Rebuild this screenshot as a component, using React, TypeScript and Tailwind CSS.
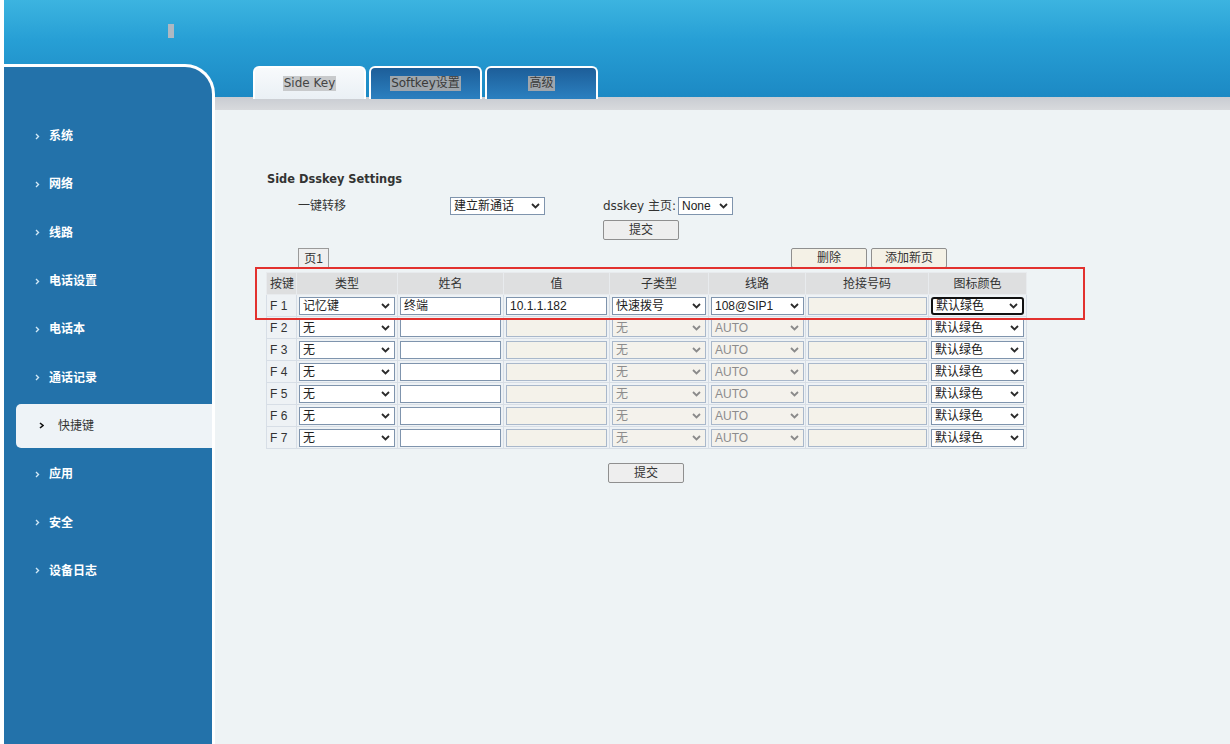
import React from 'react';

const menu = ['系统', '网络', '线路', '电话设置', '电话本', '通话记录', '快捷键', '应用', '安全', '设备日志'];

// F1 is the configured key, the rest are empty
const rows = Array.from({ length: 7 }, (_, i) => ({
  key: `F ${i + 1}`,
  type: i === 0 ? '记忆键' : '无',
  name: i === 0 ? '终端' : '',
  value: i === 0 ? '10.1.1.182' : '',
  sub: i === 0 ? '快速拨号' : '无',
  line: i === 0 ? '108@SIP1' : 'AUTO',
  active: i === 0,
}));

const Chevron: React.FC<{ muted?: boolean }> = ({ muted }) => (
  <svg width="9" height="6" viewBox="0 0 9 6" className="shrink-0">
    <path d="M1 1 L4.5 4.5 L8 1" fill="none" stroke={muted ? '#8a8a8a' : '#2b2b2b'} strokeWidth="1.8" />
  </svg>
);

const Select: React.FC<{ value: string; className: string; muted?: boolean; focused?: boolean }> = ({
  value,
  className,
  muted,
  focused,
}) => (
  <div
    className={`flex items-center justify-between h-[18px] pl-[3px] pr-[4px] text-[12px] leading-none ${className} ${
      focused
        ? 'border-2 border-[#111] rounded-[3px] bg-white text-[#222]'
        : muted
        ? 'border border-[#a9b8cb] bg-[#f4f2ec] text-[#8c8c8c]'
        : 'border border-[#7f94ad] bg-white text-[#222]'
    }`}
  >
    <span className="whitespace-nowrap">{value}</span>
    <Chevron muted={muted} />
  </div>
);

const Input: React.FC<{ value?: string; className: string; disabled?: boolean }> = ({ value, className, disabled }) => (
  <div
    className={`flex items-center h-[18px] pl-[3px] text-[12px] leading-none text-[#222] ${className} ${
      disabled ? 'border border-[#a9b8cb] bg-[#f4f2ea]' : 'border border-[#7f94ad] bg-white'
    }`}
  >
    {value}
  </div>
);

const Button: React.FC<{ label: string; className: string }> = ({ label, className }) => (
  <div
    className={`flex items-center justify-center h-[20px] border border-[#8f8f8f] rounded-[2px] text-[12px] text-[#333] ${className}`}
  >
    {label}
  </div>
);

const App: React.FC = () => {
  return (
    <div
      className="w-full h-[744px] bg-white pl-[4px] overflow-hidden text-[#333]"
      style={{ fontFamily: '"Liberation Sans", "Noto Sans CJK SC", sans-serif' }}
    >
      <div className="flex h-full bg-[linear-gradient(to_bottom,#3cb4e0_0px,#279fd5_40px,#1c89c4_97px,#c9ccd2_97px,#d8dadd_110px,#eef3f5_110px)]">
        {/* Sidebar */}
        <aside className="w-[211px] shrink-0 mt-[64px] bg-[#2372aa] rounded-tr-[30px] border-t-[3px] border-r-[3px] border-white pt-[45px]">
          {menu.map((item) =>
            item === '快捷键' ? (
              <div key={item} className="h-[48.3px] py-[2px] pl-[12px]">
                <div className="h-full flex items-center bg-[#eef3f7] rounded-l-[5px] pl-[23px]">
                  <svg width="5" height="7" viewBox="0 0 5 7" className="mr-[14px]">
                    <path d="M1 1 L4 3.5 L1 6" fill="none" stroke="#111" strokeWidth="1.6" />
                  </svg>
                  <span className="text-[12px] text-[#333]">{item}</span>
                </div>
              </div>
            ) : (
              <div key={item} className="h-[48.3px] flex items-center pl-[31px]">
                <svg width="5" height="7" viewBox="0 0 5 7" className="mr-[9px]">
                  <path d="M1 1 L3.5 3.5 L1 6" fill="none" stroke="#cfe7f6" strokeWidth="1.4" />
                </svg>
                <span className="text-[12px] font-bold text-white">{item}</span>
              </div>
            )
          )}
        </aside>

        <main className="flex-1 flex flex-col">
          {/* header area with broken logo placeholder */}
          <div className="h-[66px] relative">
            <div className="absolute left-[-47px] top-[24px] w-[6px] h-[14px] bg-[#aeb8c2]" />
          </div>

          {/* Tabs */}
          <div className="h-[44px] flex gap-[3px] pl-[38px]" style={{ fontFamily: '"DejaVu Sans", "Noto Sans CJK SC", sans-serif' }}>
            <div className="w-[113px] h-[33px] flex items-center justify-center rounded-t-[6px] border-2 border-b-0 border-white bg-[linear-gradient(to_bottom,#f8fafc,#eaf0f5)]">
              <span className="bg-[#c8cacc] text-[12px] text-[#444] px-[1px] leading-[15px]">Side Key</span>
            </div>
            <div className="w-[113px] h-[33px] flex items-center justify-center rounded-t-[6px] border-2 border-b-0 border-white bg-[linear-gradient(to_bottom,#1d5e99,#2b80c0)]">
              <span className="bg-[#9fa6ad] text-[12px] text-[#3a3a3a] px-[1px] leading-[15px]">Softkey设置</span>
            </div>
            <div className="w-[113px] h-[33px] flex items-center justify-center rounded-t-[6px] border-2 border-b-0 border-white bg-[linear-gradient(to_bottom,#1d5e99,#2b80c0)]">
              <span className="bg-[#9fa6ad] text-[12px] text-[#3a3a3a] px-[1px] leading-[15px]">高级</span>
            </div>
          </div>

          {/* Content */}
          <div className="pl-[51px] text-[12px]">
            <div
              className="mt-[61px] pl-[1px] h-[16px] leading-[16px] text-[11.4px] font-bold text-[#333]"
              style={{ fontFamily: '"DejaVu Sans", sans-serif' }}
            >
              Side Dsskey Settings
            </div>

            <div className="mt-[10px] flex items-center h-[18px]">
              <span className="ml-[32px] w-[152px]">一键转移</span>
              <Select value="建立新通话" className="w-[95px]" />
              <span className="ml-[58px] w-[75px]" style={{ fontFamily: '"DejaVu Sans", "Noto Sans CJK SC", sans-serif' }}>
                dsskey 主页:
              </span>
              <Select value="None" className="w-[55px]" />
            </div>

            <Button label="提交" className="mt-[5px] ml-[337px] w-[76px] bg-[#eeeeee]" />

            <div className="mt-[8px] flex items-end h-[20px]">
              <div className="ml-[32px] w-[31px] h-[20px] flex items-center justify-center border border-[#9a9a9a] border-b-0 bg-[#efefef]">
                页1
              </div>
              <Button label="删除" className="ml-[462px] w-[76px] bg-[#f4f1e6]" />
              <Button label="添加新页" className="ml-[4px] w-[76px] bg-[#f4f1e6]" />
            </div>

            {/* Table */}
            <div className="relative mt-[4px] w-[760px]">
              <table className="w-[760px] border-collapse table-fixed">
                <colgroup>
                  <col className="w-[30px]" />
                  <col className="w-[101px]" />
                  <col className="w-[106px]" />
                  <col className="w-[106px]" />
                  <col className="w-[99px]" />
                  <col className="w-[97px]" />
                  <col className="w-[123px]" />
                  <col className="w-[98px]" />
                </colgroup>
                <thead>
                  <tr className="h-[22px] bg-[#dedfe0]">
                    <th className="font-normal text-left pl-[3px] border border-[#e8ebee]">按键</th>
                    <th className="font-normal border border-[#e8ebee]">类型</th>
                    <th className="font-normal border border-[#e8ebee]">姓名</th>
                    <th className="font-normal border border-[#e8ebee]">值</th>
                    <th className="font-normal border border-[#e8ebee]">子类型</th>
                    <th className="font-normal border border-[#e8ebee]">线路</th>
                    <th className="font-normal border border-[#e8ebee]">抢接号码</th>
                    <th className="font-normal border border-[#e8ebee]">图标颜色</th>
                  </tr>
                </thead>
                <tbody>
                  {rows.map((r) => (
                    <tr key={r.key} className="h-[22px] bg-[#eef2f5]">
                      <td className="pl-[3px] border border-[#d7dee6] whitespace-nowrap">{r.key}</td>
                      <td className="px-[2px] border border-[#d7dee6]">
                        <Select value={r.type} className="w-[96px]" />
                      </td>
                      <td className="px-[2px] border border-[#d7dee6]">
                        <Input value={r.name} className="w-[101px]" />
                      </td>
                      <td className="px-[2px] border border-[#d7dee6]">
                        <Input value={r.value} className="w-[101px]" disabled={!r.active} />
                      </td>
                      <td className="px-[2px] border border-[#d7dee6]">
                        <Select value={r.sub} className="w-[94px]" muted={!r.active} />
                      </td>
                      <td className="px-[2px] border border-[#d7dee6]">
                        <Select value={r.line} className="w-[93px]" muted={!r.active} />
                      </td>
                      <td className="px-[2px] border border-[#d7dee6]">
                        <Input className="w-[119px]" disabled />
                      </td>
                      <td className="px-[2px] border border-[#d7dee6]">
                        <Select value="默认绿色" className="w-[93px]" focused={r.active} />
                      </td>
                    </tr>
                  ))}
                </tbody>
              </table>
              {/* red annotation box */}
              <div className="absolute left-[-11px] top-[-5px] w-[830px] h-[53px] border-2 border-[#e2312e] pointer-events-none" />
            </div>

            <Button label="提交" className="mt-[14px] ml-[342px] w-[76px] bg-[#eeeeee]" />
          </div>
        </main>
      </div>
    </div>
  );
};

export default App;
